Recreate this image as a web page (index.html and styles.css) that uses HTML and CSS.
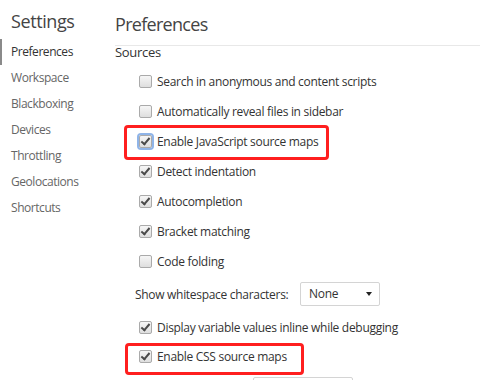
FILE: index.html
```html
<!DOCTYPE html>
<html lang="en">
<head>
    <meta charset="UTF-8">
    <meta name="viewport" content="width=device-width, initial-scale=1.0">
    <title>Settings</title>
    <link rel="stylesheet" href="styles.css">
</head>
<body>
    <div class="settings">
        <div class="sidebar">
            <div class="sidebar-title">Settings</div>
            <div class="tab active">Preferences</div>
            <div class="tab">Workspace</div>
            <div class="tab">Blackboxing</div>
            <div class="tab">Devices</div>
            <div class="tab">Throttling</div>
            <div class="tab">Geolocations</div>
            <div class="tab">Shortcuts</div>
        </div>
        <div class="content">
            <div class="content-title">Preferences</div>
            <div class="section-title">Sources</div>

            <label class="row"><span class="box"></span>Search in anonymous and content scripts</label>
            <label class="row"><span class="box"></span>Automatically reveal files in sidebar</label>
            <label class="row">
                <span class="box checked focused"></span>Enable JavaScript source maps
                <span class="mark mark-js"></span>
            </label>
            <label class="row"><span class="box checked"></span>Detect indentation</label>
            <label class="row"><span class="box checked"></span>Autocompletion</label>
            <label class="row"><span class="box checked"></span>Bracket matching</label>
            <label class="row"><span class="box"></span>Code folding</label>

            <div class="select-row">
                <span class="select-label">Show whitespace characters:</span>
                <div class="select">None<span class="arrow"></span></div>
            </div>

            <label class="row"><span class="box checked"></span>Display variable values inline while debugging</label>
            <label class="row short">
                <span class="box checked"></span>Enable CSS source maps
                <span class="mark mark-css"></span>
            </label>
            <div class="select-row cut">
                <div class="select wide"></div>
            </div>
        </div>
    </div>
</body>
</html>
```

FILE: styles.css
```css
body {
    margin: 0;
    font-family: "Open Sans", "Noto Sans", sans-serif;
    color: #333;
    background: #fff;
    overflow: hidden;
}

.settings {
    display: flex;
    height: 380px;
    overflow: hidden;
}

.sidebar {
    width: 115px;
    flex-shrink: 0;
}

.sidebar-title {
    height: 39px;
    padding-left: 11px;
    font-size: 18px;
    line-height: 42px;
    letter-spacing: -0.4px;
    color: #444;
}

.tab {
    height: 26px;
    line-height: 26px;
    padding-left: 9px;
    font-size: 12px;
    letter-spacing: -0.45px;
    color: #666;
    border-left: 2px solid transparent;
}

.tab.active {
    color: #333;
    border-left-color: #8a8a8a;
}

.content {
    flex: 1;
    overflow: hidden;
}

.content-title {
    height: 45px;
    line-height: 48px;
    font-size: 18px;
    letter-spacing: -0.7px;
    color: #444;
    border-bottom: 1px solid #e8e8e8;
}

.section-title {
    height: 20px;
    line-height: 12px;
    font-size: 13px;
    letter-spacing: -0.3px;
    color: #333;
}

.row {
    display: flex;
    align-items: center;
    height: 30px;
    padding-left: 24px;
    font-size: 12px;
    letter-spacing: -0.3px;
    position: relative;
}

.row.short {
    height: 28px;
}

.box {
    width: 11px;
    height: 11px;
    margin-right: 5px;
    border: 1px solid #aaa;
    border-radius: 2px;
    background: linear-gradient(#f6f6f6, #dedede);
    position: relative;
    flex-shrink: 0;
}

.box.checked::after {
    content: "";
    position: absolute;
    left: 3px;
    top: 0;
    width: 3px;
    height: 7px;
    border-right: 2px solid #4a4a4a;
    border-bottom: 2px solid #4a4a4a;
    transform: rotate(40deg);
}

.box.focused {
    box-shadow: 0 0 0 2px #8fb4e8;
}

.mark {
    position: absolute;
    border: 3px solid #ff1f1f;
    border-radius: 4px;
    box-sizing: border-box;
}

.mark-js {
    left: 9px;
    top: -1px;
    width: 205px;
    height: 35px;
}

.mark-css {
    left: 10px;
    top: 1px;
    width: 179px;
    height: 32px;
}

.select-row {
    display: flex;
    align-items: center;
    height: 36px;
    padding-left: 20px;
    font-size: 12px;
    letter-spacing: -0.3px;
}

.select-label {
    width: 165px;
    flex-shrink: 0;
}

.select {
    position: relative;
    width: 70px;
    height: 22px;
    line-height: 22px;
    padding-left: 8px;
    border: 1px solid #d4d4d4;
    border-radius: 2px;
}

.arrow {
    position: absolute;
    right: 7px;
    top: 9px;
    border-left: 3.5px solid transparent;
    border-right: 3.5px solid transparent;
    border-top: 4px solid #222;
}

.select-row.cut {
    align-items: flex-start;
    padding-left: 138px;
    padding-top: 7px;
}

.select.wide {
    width: 90px;
}
```
